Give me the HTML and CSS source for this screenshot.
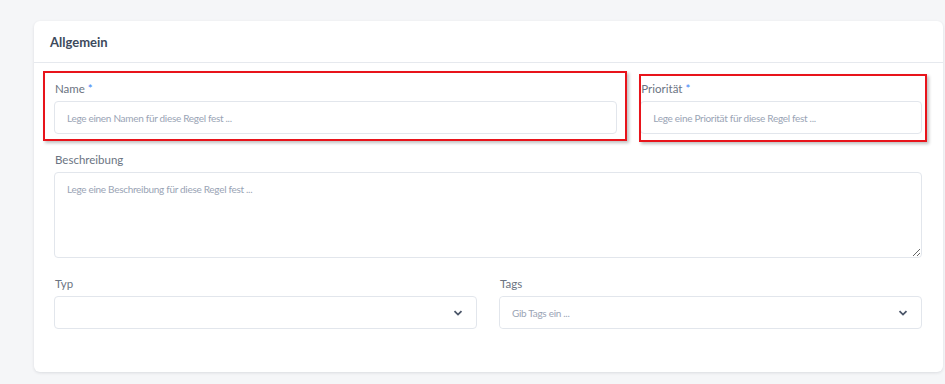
FILE: index.html
```html
<!DOCTYPE html>
<html lang="de">
  <head>
    <meta charset="UTF-8" />
    <meta name="viewport" content="width=device-width, initial-scale=1.0" />
    <title>Regel bearbeiten</title>
    <link rel="stylesheet" href="styles.css">
  </head>
  <body>
    <div class="page">
      <!-- General section card -->
      <section class="card">
        <header class="card-header">
          <h2>Allgemein</h2>
        </header>

        <div class="card-body">
          <div class="row row-main">
            <div class="field highlight highlight-name">
              <label for="rule-name">Name <span class="req">*</span></label>
              <input id="rule-name" type="text" placeholder="Lege einen Namen für diese Regel fest ..." />
            </div>
            <div class="field highlight highlight-prio">
              <label for="rule-prio">Priorität <span class="req">*</span></label>
              <input id="rule-prio" type="text" placeholder="Lege eine Priorität für diese Regel fest ..." />
            </div>
          </div>

          <div class="field">
            <label for="rule-desc">Beschreibung</label>
            <textarea id="rule-desc" placeholder="Lege eine Beschreibung für diese Regel fest ..."></textarea>
          </div>

          <div class="row row-half">
            <div class="field">
              <label>Typ</label>
              <div class="select">
                <span class="select-value"></span>
                <svg class="chevron" width="10" height="6" viewBox="0 0 10 6">
                  <path d="M1.5 1.2 5 4.6 8.5 1.2" fill="none" stroke="currentColor" stroke-width="1.8" />
                </svg>
              </div>
            </div>
            <div class="field">
              <label for="rule-tags">Tags</label>
              <div class="select">
                <input id="rule-tags" class="select-input" type="text" placeholder="Gib Tags ein ..." />
                <svg class="chevron" width="10" height="6" viewBox="0 0 10 6">
                  <path d="M1.5 1.2 5 4.6 8.5 1.2" fill="none" stroke="currentColor" stroke-width="1.8" />
                </svg>
              </div>
            </div>
          </div>
        </div>
      </section>
    </div>
  </body>
</html>
```

FILE: styles.css
```css
/* Global */
body {
  margin: 0;
  font-family: "Lato", "Liberation Sans", sans-serif;
  background-color: #f5f6f8;
  color: #3d4a5c;
}

.page {
  padding: 21px 2px 12px 34px;
}

/* Card */
.card {
  background-color: #fff;
  border-radius: 6px;
  box-shadow: 0 1px 3px rgba(30, 40, 60, 0.12);
}

.card-header {
  height: 41px;
  padding: 0 16px;
  display: flex;
  align-items: center;
  border-bottom: 1px solid #e6e9ee;
}

.card-header h2 {
  margin: 0;
  font-size: 13px;
  font-weight: 700;
  color: #3d4a5c;
}

.card-body {
  padding: 19px 21px 43px 20px;
  display: flex;
  flex-direction: column;
  gap: 19px;
}

/* Rows */
.row {
  display: grid;
  gap: 23px;
}

.row-main {
  grid-template-columns: 2fr 1fr;
}

.row-half {
  grid-template-columns: 1fr 1fr;
  gap: 22px;
}

/* Fields */
.field {
  display: flex;
  flex-direction: column;
  gap: 5px;
  position: relative;
}

.field label {
  font-size: 11.5px;
  line-height: 14px;
  color: #6b7482;
  padding-left: 1px;
}

.req {
  color: #3b82f6;
}

.field input,
.field textarea {
  box-sizing: border-box;
  width: 100%;
  font-family: inherit;
  font-size: 10px;
  letter-spacing: -0.3px;
  color: #3d4a5c;
  border: 1px solid #e2e6ec;
  border-radius: 4px;
  background-color: #fff;
  outline: none;
}

.field input {
  height: 33px;
  padding: 0 12px;
}

.field textarea {
  height: 86px;
  padding: 10px 12px;
  resize: vertical;
}

.field input::placeholder,
.field textarea::placeholder {
  color: #9aa4b5;
}

/* Select boxes */
.select {
  box-sizing: border-box;
  height: 33px;
  display: flex;
  align-items: center;
  border: 1px solid #e2e6ec;
  border-radius: 4px;
  padding: 0 13px 0 0;
}

.select-value {
  flex: 1;
}

.field .select-input {
  flex: 1;
  height: 31px;
  border: none;
}

.chevron {
  color: #4a5568;
}

/* Red annotation boxes */
.highlight::after {
  content: "";
  position: absolute;
  border: 2px solid #e8141b;
  box-shadow: 2px 2px 3px rgba(0, 0, 0, 0.25);
  pointer-events: none;
}

.highlight-name::after {
  top: -11px;
  left: -11px;
  right: -10px;
  bottom: -7px;
}

.highlight-prio::after {
  top: -8px;
  left: -1px;
  right: -5px;
  bottom: -8px;
}
```
